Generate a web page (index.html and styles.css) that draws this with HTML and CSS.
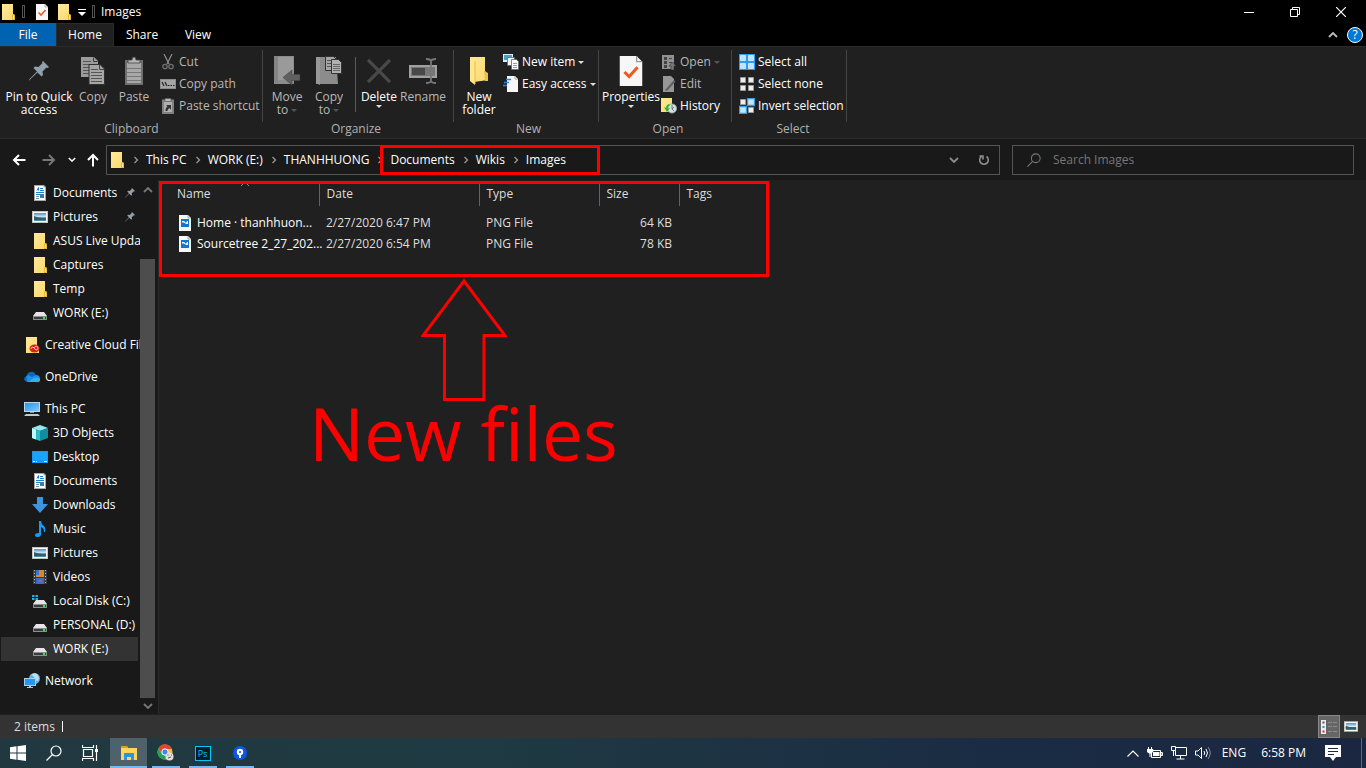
FILE: index.html
```html
<!DOCTYPE html>
<html lang="en">
<head>
<meta charset="utf-8">
<title>Images</title>
<link rel="stylesheet" href="styles.css">
</head>
<body>
<svg class="sprite" aria-hidden="true">
  <defs>
    <linearGradient id="g-folder" x1="0" x2="1" y1="0" y2="1"><stop offset="0" stop-color="#ffe9a0"/><stop offset="1" stop-color="#fbd765"/></linearGradient>
    <linearGradient id="g-screen" x1="0" x2="1" y1="0" y2="1"><stop offset="0" stop-color="#2d93e8"/><stop offset="1" stop-color="#7cc8ff"/></linearGradient>
    <linearGradient id="g-photo" x1="0" x2="0" y1="0" y2="1"><stop offset="0" stop-color="#4a90d8"/><stop offset=".5" stop-color="#d4ecfa"/><stop offset=".6" stop-color="#2d6673"/><stop offset="1" stop-color="#4e9ac0"/></linearGradient>
  </defs>
  <symbol id="folder" viewBox="0 0 16 16"><path d="M2 0h11v10l2 1v5H2z" fill="url(#g-folder)"/><path d="M12 15V11l1-1 2 1v5h-3z" fill="#e5b637"/><path d="M13 11.5h1V15h-1z" fill="#ffe9a0"/></symbol>
  <symbol id="check" viewBox="0 0 16 16"><path d="M2 0h9l3 3v13H2z" fill="#f7f7f7"/><path d="M11 0v3h3" fill="none" stroke="#999" stroke-width=".7"/><path d="M4.500 8.500l2.500 2.500 4.500-5" fill="none" stroke="#f15a1c" stroke-width="1.600"/></symbol>
  <symbol id="pin" viewBox="0 0 20 20"><path d="M14 0l6 6-1.500 1-1-.4-4 4 .5 3.500-1.500 1.500-4-4L1.500 18 0 20l.5-2L8 10.500 4.500 7 6 5.500l3.500.5 4-4-.5-1z" fill="#91a0ab"/></symbol>
  <symbol id="copy" viewBox="0 0 24 28"><path d="M0 0h13l4 4v16H0z" fill="#9c9c9c"/><path d="M12.500.5v4h4" fill="none" stroke="#3a3a3a"/><path d="M2 4.500h8M2 7.500h13M2 10.500h6M2 13.500h6M2 16.500h6" stroke="#555"/><path d="M8 7.500h11l4.500 4.500v15.500H8z" fill="#a6a6a6" stroke="#303030"/><path d="M18.500 8v4.500H23" fill="none" stroke="#444"/><path d="M10 12.500h7M10 15.500h11M10 18.500h11M10 21.500h11M10 24.500h11" stroke="#555"/></symbol>
  <symbol id="paste" viewBox="0 0 20 28"><path d="M1 3h18v25H1z" fill="#6f6f6f"/><path d="M3 6h14v20H3z" fill="#a8a8a8"/><path d="M3 11.500h14M3 15.500h14M3 19.500h14M3 23.500h14" stroke="#777"/><path d="M4 6V3h4q0-3 2-3t2 3h4v3z" fill="#b5b5b5" stroke="#444" stroke-width=".8"/></symbol>
  <symbol id="cut" viewBox="0 0 12 16"><path d="M2 0l5 10M10 0L5 10" stroke="#8f8f8f" stroke-width="1.200" fill="none"/><circle cx="3" cy="12.500" r="2.200" fill="none" stroke="#6f6f6f" stroke-width="1.300"/><circle cx="9" cy="12.500" r="2.200" fill="none" stroke="#6f6f6f" stroke-width="1.300"/></symbol>
  <symbol id="path" viewBox="0 0 16 10"><path d="M0 0h16v10H0z" fill="#8e8e8e"/><path d="M1 1h14v8H1z" fill="#a5a5a5"/><path d="M2 3l2 4M5 3l2 4M8 6.500h1.500M10.500 6.500H12M13 6.500h1.500" stroke="#222" stroke-width="1.200"/></symbol>
  <symbol id="pshort" viewBox="0 0 14 16"><path d="M1 1.500h12V16H1z" fill="#808080"/><path d="M3 4h8v10H3z" fill="#b0b0b0"/><path d="M4 .5h6v3H4z" fill="#b8b8b8" stroke="#555" stroke-width=".6"/><path d="M4.500 13q-.5-3 2-4.500L5 7h5v5L8.500 10Q6.500 11 6.500 13z" fill="#333"/></symbol>
  <symbol id="moveto" viewBox="0 0 26 30"><path d="M0 0h20v28H0z" fill="#8c8c8c"/><path d="M1 1h18v23H1z" fill="#9a9a9a"/><path d="M0 0h4v28l-4-2z" fill="#858585"/><path d="M26 18.500v6h-8V29l-9-7.500 9-7.500v4.500z" fill="#606060" stroke="#444" stroke-width=".6"/></symbol>
  <symbol id="copyto" viewBox="0 0 26 30"><path d="M0 1h20l2 27H0z" fill="#8c8c8c"/><path d="M0 1h4v28l-4-2z" fill="#999"/><path d="M9.500.5h8l3 3v11h-11z" fill="#a5a5a5" stroke="#333"/><path d="M11 4.500h5M11 7.500h5M11 10.500h4" stroke="#555"/><path d="M15.500 3.500h7l3 3v11h-10z" fill="#b0b0b0" stroke="#333"/><path d="M17 8.500h7M17 10.500h7M17 12.500h7M17 14.500h7" stroke="#666"/></symbol>
  <symbol id="delete" viewBox="0 0 24 24"><path d="M1 1l22 22M23 1L1 23" stroke="#494949" stroke-width="3.200"/></symbol>
  <symbol id="rename" viewBox="0 0 28 26"><path d="M1 8h26v11H1z" fill="#777" stroke="#a0a0a0" stroke-width="2"/><path d="M3 10h13v7H3z" fill="#484848"/><path d="M22 2v22M17 1q5 0 5 2.500Q22 1 27 1M17 25q5 0 5-2.500 0 2.500 5 2.500" fill="none" stroke="#777" stroke-width="1.800"/></symbol>
  <symbol id="newfolder" viewBox="0 0 18 28"><path d="M0 0h15v14l3 3v6L4 25z" fill="url(#g-folder)"/><path d="M0 0l5 3v25l-5-4z" fill="#ffe790"/><path d="M5 4v23" stroke="#e8bd48"/><path d="M14 14l4 2v8h-3z" fill="#eabf50"/></symbol>
  <symbol id="newitem" viewBox="0 0 16 16"><path d="M0 0h10v8H0z" fill="#d5efff"/><path d="M1 1h8v5H1z" fill="#4a9ccc"/><path d="M4.500 3.500h7v8h-7z" fill="#f5f5f5" stroke="#666" stroke-width=".8"/><path d="M8.500 5.500h5l2 2v8h-7z" fill="#fff" stroke="#666" stroke-width=".8"/><path d="M10 9.500h4M10 11.500h4M10 13.500h4" stroke="#999"/></symbol>
  <symbol id="easy" viewBox="0 0 16 16"><path d="M4 0h8l3 3v13H4z" fill="#f6f6f6"/><path d="M12 0v3h3" fill="none" stroke="#888" stroke-width=".7"/><path d="M3 3.500h5M1 6.500h5M0 9.500h4" stroke="#2386df" stroke-width="1.400"/></symbol>
  <symbol id="openi" viewBox="0 0 14 16"><path d="M0 1h12v14H0z" fill="#919191"/><path d="M2 3h3v3H2zM2 7h3v3H2zM2 11h3v3H2z" fill="#444"/><path d="M7 4.500h3M7 8.500h3" stroke="#444"/><path d="M9 16v-4H7l3.500-4L14 12h-2v4z" fill="#777" stroke="#333" stroke-width=".6"/></symbol>
  <symbol id="edit" viewBox="0 0 14 16"><path d="M1 0h8l3 3v13H1z" fill="#969696"/><path d="M3 14L12 4l1.500 1.500L5 15z" fill="#606060"/></symbol>
  <symbol id="history" viewBox="0 0 16 16"><path d="M0 0h11v14H0z" fill="url(#g-folder)"/><circle cx="11" cy="10.500" r="4.600" fill="#d9e0e3" stroke="#8ca0a8" stroke-width=".8"/><path d="M11 7v4l2-2M11 11l2 2" stroke="#53606a" fill="none" stroke-width=".8"/><path d="M8 6q-3 1-3 4l-2-1 3 5 3-4-2 .5Q7 8 9 7z" fill="#2bb52b"/></symbol>
  <symbol id="selall" viewBox="0 0 16 16"><path d="M0 0h16v16H0z" fill="#2e9bec"/><path d="M1.500 1.500h5v5h-5zM9.500 1.500h5v5h-5zM1.500 9.500h5v5h-5zM9.500 9.500h5v5h-5z" fill="#bfe3fc" stroke="#fff" stroke-width=".6"/></symbol>
  <symbol id="selnone" viewBox="0 0 16 16"><path d="M1.500 1.500h5v5h-5zM9.500 1.500h5v5h-5zM1.500 9.500h5v5h-5zM9.500 9.500h5v5h-5z" fill="#eee" stroke="#999"/></symbol>
  <symbol id="selinv" viewBox="0 0 16 16"><path d="M1.500 1.500h5v5h-5zM9.500 9.500h5v5h-5z" fill="#eee" stroke="#999"/><path d="M8.500.5h7v7h-7zM.5 8.500h7v7h-7z" fill="#c5e6fd" stroke="#2e9bec" stroke-width="1.300"/></symbol>
  <symbol id="doc" viewBox="0 0 16 16"><path d="M2 0h10l2 2v14H2z" fill="#a8a8a8"/><path d="M3 1h8l2 2v12H3z" fill="#fff"/><path d="M5 5.500l1.500-3v3M8 3.500h3M8 5.500h4M4 7.500h8M4 9.500h4" stroke="#1683c9" fill="none"/><path d="M4 11.500h3M4 13.500h3" stroke="#78909c" fill="none"/><path d="M8 9h4v4H8z" fill="#3e7ca8"/></symbol>
  <symbol id="pic" viewBox="0 0 16 12"><path d="M0 0h16v12H0z" fill="#c4c4c4"/><path d="M1 1h14v10H1z" fill="#fff"/><path d="M2 2h12v8H2z" fill="url(#g-photo)"/><path d="M2 5q4 2 8 2l4 1v1H2z" fill="#31605c"/></symbol>
  <symbol id="drive" viewBox="0 0 16 16"><path d="M4 7h8l3 4H1z" fill="#e5e5e8"/><path d="M1 11h14v4H1z" fill="#8d8e92"/><path d="M2 12h12v2H2z" fill="#3c3c40"/><path d="M11 12h2v2h-2z" fill="#3ee048"/></symbol>
  <symbol id="cdrive" viewBox="0 0 16 16"><path d="M4 7h8l3 4H1z" fill="#e5e5e8"/><path d="M1 11h14v4H1z" fill="#8d8e92"/><path d="M2 12h12v2H2z" fill="#3c3c40"/><path d="M11 12h2v2h-2z" fill="#3ee048"/><path d="M0 2h2.500v2H0zM3.500 2H6v2H3.500zM0 5h2.500v2H0zM3.500 5H6v2H3.500z" fill="#14b5ee"/></symbol>
  <symbol id="ccloud" viewBox="0 0 16 16"><path d="M2 0h11v10l2 1v5H2z" fill="url(#g-folder)"/><ellipse cx="10.500" cy="11.500" rx="5" ry="4" fill="#dc2419"/><path d="M7 12q0-2 2-2l3 3q2 0 2-2t-2-2l-2 2" fill="none" stroke="#ffc2a8"/></symbol>
  <symbol id="onedrive" viewBox="0 0 16 12"><path d="M3 5q0-4 4-4 3-1 5 3l2 2-9 5H3Q0 10 0 8t3-3z" fill="#0f67b8"/><path d="M2 5q3-2 6 1l4-2q4 0 4 4t-4 3H4Q2 11 3 8z" fill="#1f8fe0"/><path d="M4 11l6-4q6-1 6 1.500T13 11z" fill="#36aff0"/></symbol>
  <symbol id="pc" viewBox="0 0 16 16"><path d="M0 1h16v10H0z" fill="#b9d9ea"/><path d="M1 2h14v8H1z" fill="url(#g-screen)"/><path d="M6 11h4v1H6z" fill="#6aa0bf"/><path d="M2 13h12l2 2H0z" fill="#c0c8cd"/></symbol>
  <symbol id="cube" viewBox="0 0 16 16"><path d="M8 0l8 3-8 3-8-3z" fill="#8fe9f0"/><path d="M0 3l8 3v10l-8-3z" fill="#28bccb"/><path d="M16 3L8 6v10l8-3z" fill="#108d9f"/><path d="M0 3l4 1.500v10L0 13z" fill="#c3f6f7"/></symbol>
  <symbol id="desktop" viewBox="0 0 16 16"><path d="M0 2h16v12H0z" fill="#159afa"/><path d="M1 3h14v8H1z" fill="#19a3ff"/><path d="M1 12.500h2M4 12.500h1M12 12.500h3" stroke="#d8f1ff"/></symbol>
  <symbol id="down" viewBox="0 0 16 16"><path d="M5 0h6v7h5l-8 9-8-9h5z" fill="#3d94df"/></symbol>
  <symbol id="music" viewBox="0 0 16 16"><path d="M7 0h2q0 3 3 5 2 2 1 6h-1q0-4-3-5v7q0 3-3 3-3 0-3-2t4-2z" fill="#159cf7"/></symbol>
  <symbol id="video" viewBox="0 0 16 16"><path d="M1 1h14v14H1z" fill="#3a3e43"/><path d="M4 1h8v7H4z" fill="#d08a35"/><path d="M4 1h3v5H4z" fill="#3b72d0"/><path d="M4 9h8v6H4z" fill="#386dcb"/><path d="M8 10l3 3H6z" fill="#e04f37"/><path d="M2.500 1v14M13.500 1v14" stroke="#bbb" stroke-dasharray="1 2"/></symbol>
  <symbol id="network" viewBox="0 0 16 16"><circle cx="10.500" cy="5.500" r="5.500" fill="#6caed4"/><path d="M7 2q4 1 3 5l4 1q2-4-1-7-3-2-6 1z" fill="#b8dff1"/><path d="M0 5h12v8H0z" fill="#9fd0ee"/><path d="M1 6h10v6H1z" fill="#2797eb"/><path d="M5 13h2v1h2v1H3v-1h2z" fill="#bac7ce"/></symbol>
  <symbol id="png" viewBox="0 0 16 16"><path d="M2 0h9l3 3v13H2z" fill="#f7f7f7"/><path d="M11 0v3h3" fill="none" stroke="#888" stroke-width=".7"/><path d="M4 4h8v8H4z" fill="#1376cf"/><path d="M5 6h2l2 2 1-2h1v3H9L8 8H7L6 7 5 8z" fill="#fff"/></symbol>
  <symbol id="mag" viewBox="0 0 16 16"><circle cx="10" cy="6" r="5" fill="none" stroke="currentColor" stroke-width="1.200"/><path d="M6.500 9.500L.5 15.500" stroke="currentColor" stroke-width="1.300"/></symbol>
  <symbol id="left" viewBox="0 0 14 12"><path d="M13.500 6H2M7 1L2 6l5 5" fill="none" stroke="currentColor" stroke-width="2"/></symbol>
  <symbol id="chev" viewBox="0 0 10 6"><path d="M1 1l4 4 4-4" fill="none" stroke="currentColor" stroke-width="1.800"/></symbol>
  <symbol id="chevr" viewBox="0 0 6 8"><path d="M1.500 1l3 3-3 3" fill="none" stroke="currentColor" stroke-width="1.300"/></symbol>
</svg>

<header class="titlebar">
  <svg class="i16"><use href="#folder"/></svg><i class="grip"></i>
  <button class="bare qa" aria-label="Properties"><svg class="i16"><use href="#check"/></svg></button>
  <button class="bare qa" aria-label="New folder"><svg class="i16"><use href="#folder"/></svg></button>
  <button class="bare custom" aria-label="Customize toolbar"><svg width="8" height="8" viewBox="0 0 8 8"><path d="M0 1.500h8" stroke="#fff"/><path d="M0 4h8L4 8z" fill="#fff"/></svg></button>
  <i class="grip"></i><h1 class="title">Images</h1>
  <div class="winctl">
    <button class="bare" aria-label="Minimize"><svg width="10" height="10"><path d="M0 5.500h10" stroke="#fff"/></svg></button>
    <button class="bare" aria-label="Restore"><svg width="10" height="10"><path d="M.5 2.500h7v7h-7zM2.500 2V.5h7v7H8" fill="none" stroke="#fff"/></svg></button>
    <button class="bare" aria-label="Close"><svg width="10" height="10"><path d="M0 0l10 10M10 0L0 10" stroke="#fff" stroke-width="1.200"/></svg></button>
  </div>
</header>

<nav class="tabs">
  <button class="bare tab file">File</button><button class="bare tab home">Home</button><button class="bare tab">Share</button><button class="bare tab">View</button>
  <div class="help">
    <button class="bare" aria-label="Collapse ribbon"><svg class="chevup" width="10" height="6"><use href="#chev"/></svg></button>
    <button class="bare helpbtn" aria-label="Help">?</button>
  </div>
</nav>

<section class="ribbon">
  <div class="group clip">
    <div class="tools">
      <button class="bare big on w78"><svg class="art" width="20" height="20"><use href="#pin"/></svg><span>Pin to Quick access</span></button>
      <button class="bare big w30"><svg class="art" width="24" height="28"><use href="#copy"/></svg><span>Copy</span></button>
      <button class="bare big w52"><svg class="art" width="20" height="28"><use href="#paste"/></svg><span>Paste</span></button>
      <div class="stack">
        <button class="bare small"><svg class="i16"><use href="#cut"/></svg>Cut</button>
        <button class="bare small"><svg class="i16"><use href="#path"/></svg>Copy path</button>
        <button class="bare small"><svg class="i16"><use href="#pshort"/></svg>Paste shortcut</button>
      </div>
    </div>
    <h2>Clipboard</h2>
  </div>
  <div class="group org">
    <div class="tools">
      <button class="bare big w42"><svg class="art" width="26" height="30"><use href="#moveto"/></svg><span>Move to <b class="tri"></b></span></button>
      <button class="bare big w42"><svg class="art" width="26" height="30"><use href="#copyto"/></svg><span>Copy to <b class="tri"></b></span></button>
      <i class="line"></i>
      <button class="bare big on w42"><svg class="art" width="24" height="24"><use href="#delete"/></svg><span>Delete</span><b class="tri lite"></b></button>
      <button class="bare big w46"><svg class="art" width="28" height="26"><use href="#rename"/></svg><span>Rename</span></button>
    </div>
    <h2>Organize</h2>
  </div>
  <div class="group new">
    <div class="tools">
      <button class="bare big on w42"><svg class="art" width="18" height="28"><use href="#newfolder"/></svg><span>New folder</span></button>
      <div class="stack inset">
        <button class="bare small on"><svg class="i16"><use href="#newitem"/></svg>New item<b class="tri lite"></b></button>
        <button class="bare small on"><svg class="i16"><use href="#easy"/></svg>Easy access<b class="tri lite"></b></button>
      </div>
    </div>
    <h2>New</h2>
  </div>
  <div class="group open">
    <div class="tools">
      <button class="bare big on w54"><svg class="art" width="30" height="28"><use href="#check"/></svg><span>Properties</span><b class="tri lite"></b></button>
      <div class="stack inset">
        <button class="bare small"><svg class="i16"><use href="#openi"/></svg>Open<b class="tri"></b></button>
        <button class="bare small"><svg class="i16"><use href="#edit"/></svg>Edit</button>
        <button class="bare small on"><svg class="i16"><use href="#history"/></svg>History</button>
      </div>
    </div>
    <h2>Open</h2>
  </div>
  <div class="group sel">
    <div class="tools">
      <div class="stack">
        <button class="bare small on"><svg class="i16"><use href="#selall"/></svg>Select all</button>
        <button class="bare small on"><svg class="i16"><use href="#selnone"/></svg>Select none</button>
        <button class="bare small on"><svg class="i16"><use href="#selinv"/></svg>Invert selection</button>
      </div>
    </div>
    <h2>Select</h2>
  </div>
</section>

<section class="addressrow">
  <button class="bare nav" aria-label="Back"><svg width="14" height="12"><use href="#left"/></svg></button>
  <button class="bare nav dim" aria-label="Forward"><svg class="flip" width="14" height="12"><use href="#left"/></svg></button>
  <button class="bare nav slim" aria-label="Recent"><svg width="8" height="5"><use href="#chev"/></svg></button>
  <button class="bare nav up" aria-label="Up"><svg class="rot" width="14" height="12"><use href="#left"/></svg></button>
  <div class="address">
    <svg class="i16"><use href="#folder"/></svg>
    <ol class="crumbs">
      <li><svg class="sep"><use href="#chevr"/></svg><a href="#">This PC</a></li>
      <li><svg class="sep"><use href="#chevr"/></svg><a href="#">WORK (E:)</a></li>
      <li><svg class="sep"><use href="#chevr"/></svg><a href="#">THANHHUONG</a></li>
      <li><svg class="sep"><use href="#chevr"/></svg><a href="#">Documents</a></li>
      <li><svg class="sep"><use href="#chevr"/></svg><a href="#">Wikis</a></li>
      <li><svg class="sep"><use href="#chevr"/></svg><a href="#">Images</a></li>
    </ol>
    <button class="bare addrbtn" aria-label="Previous locations"><svg width="10" height="6"><use href="#chev"/></svg></button>
    <button class="bare addrbtn" aria-label="Refresh"><svg width="12" height="12"><path d="M8.500 2.500a4.300 4.300 0 1 1-5 0M1.500 2h3.500v3.500" fill="none" stroke="currentColor" stroke-width="1.600"/></svg></button>
    <div class="mark crumbmark"></div>
  </div>
  <label class="search"><svg width="14" height="14"><use href="#mag"/></svg><input type="text" placeholder="Search Images" aria-label="Search Images"></label>
</section>

<main class="main">
  <aside class="side">
    <ul class="tree">
      <li class="sub"><svg class="i16"><use href="#doc"/></svg><a href="#">Documents</a><svg class="pinned"><use href="#pin"/></svg></li>
      <li class="sub"><svg class="i16"><use href="#pic"/></svg><a href="#">Pictures</a><svg class="pinned"><use href="#pin"/></svg></li>
      <li class="sub"><svg class="i16"><use href="#folder"/></svg><a href="#">ASUS Live Updat</a></li>
      <li class="sub"><svg class="i16"><use href="#folder"/></svg><a href="#">Captures</a></li>
      <li class="sub"><svg class="i16"><use href="#folder"/></svg><a href="#">Temp</a></li>
      <li class="sub"><svg class="i16"><use href="#drive"/></svg><a href="#">WORK (E:)</a></li>
      <li class="root"><svg class="i16"><use href="#ccloud"/></svg><a href="#">Creative Cloud Fil</a></li>
      <li class="root"><svg class="i16"><use href="#onedrive"/></svg><a href="#">OneDrive</a></li>
      <li class="root"><svg class="i16"><use href="#pc"/></svg><a href="#">This PC</a></li>
      <li class="sub"><svg class="i16"><use href="#cube"/></svg><a href="#">3D Objects</a></li>
      <li class="sub"><svg class="i16"><use href="#desktop"/></svg><a href="#">Desktop</a></li>
      <li class="sub"><svg class="i16"><use href="#doc"/></svg><a href="#">Documents</a></li>
      <li class="sub"><svg class="i16"><use href="#down"/></svg><a href="#">Downloads</a></li>
      <li class="sub"><svg class="i16"><use href="#music"/></svg><a href="#">Music</a></li>
      <li class="sub"><svg class="i16"><use href="#pic"/></svg><a href="#">Pictures</a></li>
      <li class="sub"><svg class="i16"><use href="#video"/></svg><a href="#">Videos</a></li>
      <li class="sub"><svg class="i16"><use href="#cdrive"/></svg><a href="#">Local Disk (C:)</a></li>
      <li class="sub"><svg class="i16"><use href="#drive"/></svg><a href="#">PERSONAL (D:)</a></li>
      <li class="sub current"><svg class="i16"><use href="#drive"/></svg><a href="#">WORK (E:)</a></li>
      <li class="root"><svg class="i16"><use href="#network"/></svg><a href="#">Network</a></li>
    </ul>
    <div class="scroll">
      <svg class="chevup" width="10" height="6"><use href="#chev"/></svg>
      <div class="track"><div class="thumb"></div></div>
      <svg width="10" height="6"><use href="#chev"/></svg>
    </div>
  </aside>
  <section class="content">
    <table class="files">
      <colgroup><col class="c160"><col class="c160"><col class="c120"><col class="c80"><col></colgroup>
      <thead><tr><th>Name</th><th>Date</th><th>Type</th><th>Size</th><th>Tags</th></tr></thead>
      <tbody>
        <tr><td><div class="fname"><svg class="i16"><use href="#png"/></svg>Home · thanhhuon...</div></td><td>2/27/2020 6:47 PM</td><td>PNG File</td><td class="num">64 KB</td><td></td></tr>
        <tr><td><div class="fname"><svg class="i16"><use href="#png"/></svg>Sourcetree 2_27_202...</div></td><td>2/27/2020 6:54 PM</td><td>PNG File</td><td class="num">78 KB</td><td></td></tr>
      </tbody>
    </table>
    <svg class="sort" width="8" height="4"><path d="M0 4l4-4 4 4" fill="none" stroke="#888"/></svg>
    <div class="mark filemark"></div>
    <svg class="arrow" width="86" height="124" viewBox="0 0 86 124"><path d="M43 4l41 54.500H63v64H23.500v-64H2z" fill="none" stroke="#f00" stroke-width="3"/></svg>
    <p class="note">New files</p>
  </section>
</main>

<footer class="status">
  <span>2 items</span><i class="tick"></i>
  <div class="views">
    <button class="bare view active" aria-label="Details"><svg width="16" height="14"><path d="M0 0h5v14H0z" fill="#eee"/><path d="M1.500 2.500h2" stroke="#557" stroke-width="2"/><path d="M1.500 7h2" stroke="#2f8fe0" stroke-width="2"/><path d="M1.500 11.500h2" stroke="#d22" stroke-width="2"/><path d="M7 2.500h9M7 6.500h9M7 11.500h9" stroke="#8c8c8c" stroke-dasharray="4 1"/></svg></button>
    <button class="bare view" aria-label="Large icons"><svg width="14" height="11"><use href="#pic"/></svg></button>
  </div>
</footer>

<footer class="taskbar">
  <button class="bare task" aria-label="Start"><svg width="16" height="16"><path d="M0 2.300L6.500 1.300v6.200H0zM7.500 1.200L16 0v7.500H7.500zM0 8.500h6.500v6.200L0 13.700zM7.500 8.500H16V16l-8.500-1.200z" fill="#fff"/></svg></button>
  <button class="bare task" aria-label="Search"><svg class="i16 white"><use href="#mag"/></svg></button>
  <button class="bare task" aria-label="Task view"><svg width="17" height="16"><path d="M1.500 4.500h9v7h-9zM.5 0v2.500h11V0M.5 16v-2.500h11V16M14.500 0v16" fill="none" stroke="#fff" stroke-width="1.200"/><path d="M13 4h3v3h-3z" fill="#fff"/></svg></button>
  <button class="bare task run active" aria-label="File Explorer"><svg width="18" height="16"><path d="M1 1h6l1 2h9v12H1z" fill="#ffd55d"/><path d="M1 1h6l1 2H1z" fill="#dca123"/><path d="M4 15V8h10v7h-3v-3H7v3z" fill="#2f94df"/></svg></button>
  <button class="bare task run" aria-label="Chrome"><svg width="18" height="18" viewBox="0 0 18 18"><circle cx="8" cy="8" r="7.500" fill="#f5c52c"/><path d="M1.500 4.200A7.500 7.500 0 0 1 15 5H8L5 10z" fill="#df4434"/><path d="M1.500 4.200A7.500 7.500 0 0 0 8 15.500l3-5H5z" fill="#20a25b"/><circle cx="8" cy="8" r="3.200" fill="#4583ed" stroke="#fff"/><circle cx="12.500" cy="12.500" r="4" fill="#e5e0dc"/><path d="M10.500 11h1M14 11h1M11 14l3-1" stroke="#555"/></svg></button>
  <button class="bare task run" aria-label="Photoshop"><span class="ps">Ps</span></button>
  <button class="bare task run" aria-label="Sourcetree"><svg width="14" height="14"><circle cx="7" cy="7" r="7" fill="#0a58e2"/><circle cx="7" cy="6" r="3.200" fill="#fff"/><path d="M6 8h2v4H6z" fill="#fff"/><circle cx="7" cy="6" r="1.100" fill="#0a58e2"/></svg></button>
  <div class="tray">
    <svg class="chevup" width="12" height="7" viewBox="0 0 12 7"><path d="M.5.5L6 6 11.500.5" fill="none" stroke="#fff" stroke-width="1.200"/></svg>
    <svg width="16" height="12"><path d="M4.500 3.500h9v7h-9zM14 5.500h1.500v3H14z" fill="none" stroke="#fff"/><path d="M6 5h6.500v4H6z" fill="#fff"/><path d="M1.500 0v2M4.500 0v2M0 2.500h6v2L4 6H2L0 4.500zM3 6v4" fill="#fff" stroke="#fff"/></svg>
    <svg width="16" height="14"><path d="M4 1.500h11.500v8H4.500V5M9.500 10v3M5.500 13h8M.5.500h4v4h-4zM2.500 5v5" fill="none" stroke="#fff"/></svg>
    <svg width="16" height="14"><path d="M.5 5h2.500l3.500-3.500v11L3 9H.5z" fill="none" stroke="#fff"/><path d="M9 5q1.500 2 0 4M11 3q3 4 0 8" fill="none" stroke="#fff"/><path d="M13 1q4.500 6 0 12" fill="none" stroke="#889"/></svg>
    <span class="lang">ENG</span><time class="clock">6:58 PM</time>
    <svg class="action" width="16" height="16"><path d="M0 0h16v12h-5l-3 4-3-4H0z" fill="#fff"/><path d="M3 3.500h10M3 6.500h10M3 9.500h6" stroke="#1b2a42"/></svg>
    <i class="peek"></i>
  </div>
</footer>
</body>
</html>
```
FILE: styles.css
```css
* { box-sizing: border-box; }
body {
  margin: 0;
  min-height: 100vh;
  display: flex;
  flex-direction: column;
  background: #191919;
  color: #fff;
  font: 12px/16px "Open Sans", "Noto Sans", sans-serif;
  overflow: hidden;
}
h1, h2, p, ul, ol { margin: 0; padding: 0; font: inherit; list-style: none; }
a { color: inherit; text-decoration: none; white-space: nowrap; }
svg { display: block; flex: none; }
.sprite { position: absolute; width: 0; height: 0; }
.bare { border: 0; padding: 0; margin: 0; background: none; color: inherit; font: inherit; }
.i16 { width: 16px; height: 16px; }
.chevup { transform: rotate(180deg); }
.flip { transform: scaleX(-1); }
.rot { transform: rotate(90deg); }

.titlebar { height: 23px; display: flex; align-items: center; background: #000; }
.grip { width: 3px; height: 13px; margin: 0 6px; border: 1px solid #555; }
.qa { margin: 0 3px; }
.custom { margin: 0 0 0 3px; }
.winctl { margin-left: auto; display: flex; padding-right: 2px; }
.winctl .bare { width: 46px; height: 20px; display: grid; place-items: center; }

.tabs { height: 23px; display: flex; background: #000; }
.tab { width: 56px; height: 23px; }
.file { background: #0063b1; }
.home { width: 58px; background: #202020; border: 1px solid #2b2b2b; border-bottom: 0; }
.help { margin-left: auto; display: flex; align-items: center; gap: 9px; padding-right: 3px; color: #bbb; }
.helpbtn { width: 16px; height: 16px; border: 1px solid #fff; border-radius: 50%; background: #0078d7; color: #fff; line-height: 14px; }

.ribbon { display: flex; background: #202020; border-top: 1px solid #2b2b2b; border-bottom: 1px solid #2b2b2b; padding: 3px 0 0; }
.group { display: flex; flex-direction: column; height: 88px; color: #b8b8b8; background: linear-gradient(#454545, #454545) right top / 1px 72px no-repeat; }
.group h2 { text-align: center; line-height: 16px; color: #b0b0b0; }
.tools { display: flex; height: 71px; padding-top: 1px; }
.clip { width: 263px; }
.org { width: 191px; padding: 0 8px 0 3px; }
.new { width: 145px; padding-left: 4px; }
.open { width: 133px; padding-left: 5px; }
.sel { width: 115px; padding-left: 7px; }
.big { display: flex; flex-direction: column; align-items: center; line-height: 13px; white-space: nowrap; }
.big span { text-align: center; }
.art { height: 32px; margin: 4px 0 3px; }
.on { color: #fff; }
.w78 { width: 78px; white-space: normal; }
.w30 { width: 30px; }
.w52 { width: 52px; }
.w54 { width: 54px; }
.w42 { width: 42px; white-space: normal; }
.w46 { width: 46px; }
.line { width: 1px; height: 55px; margin: 6px 2px 0 5px; background: #5a5a5a; }
.stack { display: flex; flex-direction: column; }
.inset { padding-left: 3px; }
.small { height: 22px; display: flex; align-items: center; gap: 3px; white-space: nowrap; }
.tri { display: inline-block; border: 3px solid transparent; border-top-color: #555; border-bottom: 0; margin: 2px 0; }
.tri.lite { border-top-color: #ddd; }

.addressrow { height: 41px; flex: none; display: flex; align-items: center; padding: 0 12px 0 4px; background: #191919; }
.nav { width: 30px; height: 28px; display: grid; place-items: center; }
.dim { color: #777; }
.slim { width: 16px; }
.up { width: 26px; }
.address { position: relative; flex: 1 1 894px; height: 30px; display: flex; align-items: center; border: 1px solid #535353; padding-left: 2px; }
.crumbs { display: flex; margin-right: auto; }
.crumbs li { display: flex; align-items: center; }
.sep { width: 6px; height: 8px; margin: 0 7px 0 8px; color: #999; }
.addrbtn { width: 30px; height: 28px; display: grid; place-items: center; color: #8c8c8c; }
.search { flex: 1 1 342px; height: 30px; margin-left: 12px; display: flex; align-items: center; gap: 12px; border: 1px solid #535353; padding: 0 14px; color: #777; }
.search input { flex: 1; min-width: 0; border: 0; padding: 0; outline: 0; background: none; color: #fff; font: inherit; }
.search input::placeholder { color: #777; opacity: 1; }
.mark { position: absolute; border: 3px solid #f00; pointer-events: none; }
.crumbmark { left: 273px; top: -1px; width: 220px; height: 30px; }

.main { flex: 1; min-height: 0; display: flex; }
.side { width: 159px; flex: none; display: flex; border-right: 1px solid #2b2b2b; }
.tree { width: 140px; padding-top: 1px; overflow: hidden; }
.tree li { height: 24px; display: flex; align-items: center; gap: 5px; padding-left: 24px; }
.tree .sub { padding-left: 32px; }
.tree .root { margin-top: 8px; }
.tree .current { margin: 0 2px 0 1px; padding-left: 31px; background: #333; }
.pinned { width: 10px; height: 10px; margin: 0 5px 0 auto; }
.scroll { width: 15px; display: flex; flex-direction: column; align-items: center; padding: 7px 0 5px; color: #777; }
.track { flex: 1; width: 15px; display: flex; flex-direction: column; justify-content: flex-end; padding-bottom: 5px; }
.thumb { height: 87%; background: #4d4d4d; }

.content { position: relative; flex: 1; min-width: 0; background: #202020; padding-top: 3px; }
.files { width: 640px; table-layout: fixed; border-collapse: collapse; white-space: nowrap; }
.c160 { width: 160px; }
.c120 { width: 120px; }
.c80 { width: 80px; }
.files th { height: 23px; padding: 0 0 2px 7px; border-right: 1px solid #636363; text-align: left; font-weight: 400; color: #dedede; }
.files th:first-child { padding-left: 18px; }
.files th:last-child { border: 0; }
.files td { height: 21px; padding: 0 0 0 7px; color: #dedede; }
.files td:first-child { padding-left: 18px; color: #fff; }
.files tbody::before { content: ""; display: block; height: 6px; }
.files .num { text-align: right; padding-right: 7px; }
.fname { display: flex; align-items: center; gap: 4px; }
.sort { position: absolute; left: 82px; top: 2px; }
.filemark { left: 0; top: 1px; width: 610px; height: 96px; }
.arrow { position: absolute; left: 262px; top: 97px; }
.note { position: absolute; left: 150px; top: 198px; font-size: 73px; line-height: 110px; color: #f00; white-space: nowrap; }

.status { height: 24px; flex: none; display: flex; align-items: center; padding-left: 14px; background: #333; color: #ddd; border-top: 1px solid #202020; }
.tick { width: 1px; height: 11px; margin-left: 7px; background: #fff; }
.views { margin-left: auto; display: flex; padding-right: 4px; }
.view { width: 22px; height: 23px; display: grid; place-items: center; }
.view.active { background: #666; border: 1px solid #888; }

.taskbar { height: 30px; flex: none; display: flex; background: linear-gradient(90deg, #213840, #1f3a42 35%, #1a2b44 75%, #1b2740); }
.task { width: 36px; display: grid; place-items: center; }
.task.run { width: 37px; background: linear-gradient(#76b9ed, #76b9ed) center bottom / 28px 2px no-repeat; }
.task.run.active { margin-left: 2px; background: linear-gradient(#76b9ed, #76b9ed) center bottom / 100% 2px no-repeat #4e626b; }
.white { color: #fff; }
.ps { width: 16px; height: 15px; border: 1px solid #00c8ff; background: #001d26; color: #00c8ff; font-size: 9px; line-height: 13px; text-align: center; }
.tray { margin-left: auto; display: flex; align-items: center; gap: 8px; }
.lang { margin-left: 3px; }
.clock { margin-left: 7px; }
.action { margin-left: 11px; }
.peek { width: 1px; height: 30px; margin: 0 4px 0 12px; background: #5c6878; }
```
